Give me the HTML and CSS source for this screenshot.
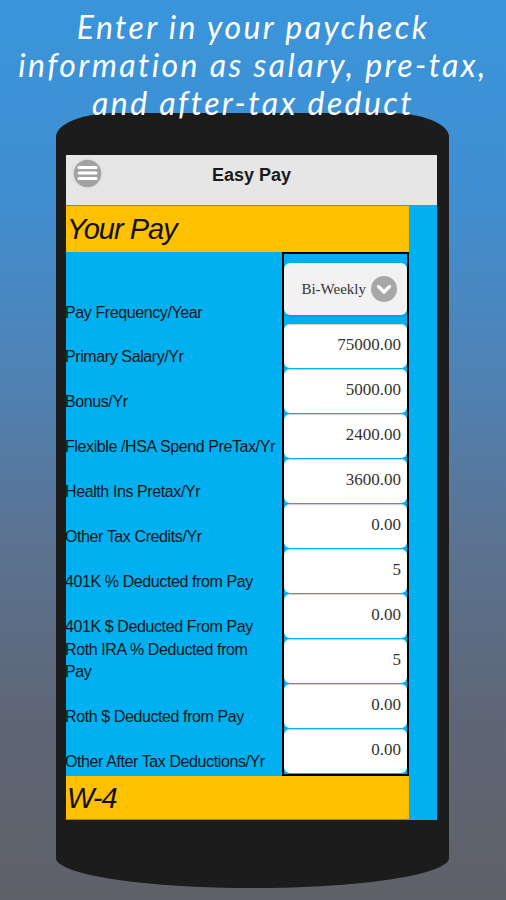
FILE: index.html
```html
<!DOCTYPE html>
<html lang="en">
<head>
  <meta charset="UTF-8" />
  <meta name="viewport" content="width=device-width, initial-scale=1.0" />
  <title>Easy Pay</title>
  <link rel="stylesheet" href="styles.css">
</head>
<body>
  <h1 class="promo">Enter in your paycheck<br>information as salary, pre-tax,<br>and after-tax deduct</h1>

  <div class="phone">
    <div class="screen">
      <header class="appbar">
        <button class="menu-btn" aria-label="Menu">
          <svg width="33" height="33" viewBox="0 0 33 33">
            <circle cx="16.5" cy="16.5" r="15" fill="#a2a2a2" stroke="#e2e2e2" stroke-width="2.5"/>
            <g stroke="#fff" stroke-width="3" stroke-linecap="round">
              <line x1="8" y1="10.5" x2="25" y2="10.5"/>
              <line x1="8" y1="16" x2="25" y2="16"/>
              <line x1="8" y1="21.5" x2="25" y2="21.5"/>
            </g>
          </svg>
        </button>
        <h2 class="appbar-title">Easy Pay</h2>
      </header>

      <div class="content">
        <h3 class="section-head">Your Pay</h3>

        <div class="pay-form">
          <div class="labels">
            <div class="label first">Pay Frequency/Year</div>
            <div class="label">Primary Salary/Yr</div>
            <div class="label">Bonus/Yr</div>
            <div class="label">Flexible /HSA Spend PreTax/Yr</div>
            <div class="label">Health Ins Pretax/Yr</div>
            <div class="label">Other Tax Credits/Yr</div>
            <div class="label">401K % Deducted from Pay</div>
            <div class="label">401K $ Deducted From Pay</div>
            <div class="label">Roth IRA % Deducted from<br>Pay</div>
            <div class="label">Roth $ Deducted from Pay</div>
            <div class="label">Other After Tax Deductions/Yr</div>
          </div>

          <div class="fields">
            <div class="select-row">
              <div class="select-box">
                <span>Bi-Weekly</span>
                <svg width="26" height="26" viewBox="0 0 26 26">
                  <circle cx="13" cy="13" r="13" fill="#a7a7a7"/>
                  <path d="M7.5 10.5 L13 16 L18.5 10.5" fill="none" stroke="#fff" stroke-width="3.2" stroke-linecap="round" stroke-linejoin="round"/>
                </svg>
              </div>
            </div>
            <div class="field">75000.00</div>
            <div class="field">5000.00</div>
            <div class="field">2400.00</div>
            <div class="field">3600.00</div>
            <div class="field">0.00</div>
            <div class="field">5</div>
            <div class="field">0.00</div>
            <div class="field">5</div>
            <div class="field">0.00</div>
            <div class="field">0.00</div>
          </div>
        </div>

        <h3 class="section-head w4">W-4</h3>
      </div>
    </div>
  </div>
</body>
</html>
```

FILE: styles.css
```css
/* Fondo general */
body {
  margin: 0;
  width: 506px;
  height: 900px;
  overflow: hidden;
  background: linear-gradient(180deg, #3a95db 0%, #3f8fd2 20%, #4f82b4 42%, #5a7391 60%, #5e6676 80%, #5f6168 100%);
  font-family: "Liberation Sans", Arial, sans-serif;
}

/* Titulo promocional */
.promo {
  position: relative;
  z-index: 1;
  margin: 8px 0 -9px;
  text-align: center;
  color: #fff;
  font-family: Lato, "Open Sans", sans-serif;
  font-style: italic;
  font-weight: 400;
  font-size: 32px;
  line-height: 38px;
  letter-spacing: 2.4px;
  white-space: nowrap;
}

/* Telefono */
.phone {
  width: 371px;
  height: 733px;
  margin-left: 56px;
  padding: 42px 12px 0 10px;
  background: #1c1c1c;
  border-radius: 60px 60px 50% 50% / 24px 24px 30px 30px;
}

.screen {
  width: 371px;
  height: 665px;
  overflow: hidden;
  background: #00b0f0;
}

/* Barra superior */
.appbar {
  display: grid;
  grid-template-columns: 1fr auto 1fr;
  align-items: center;
  height: 40px;
  padding-bottom: 10px;
  background: #e6e6e6;
}

.menu-btn {
  justify-self: start;
  align-self: start;
  margin: 2px 0 0 5px;
  padding: 0;
  border: none;
  background: none;
  line-height: 0;
}

.appbar-title {
  margin: 0;
  font-size: 18px;
  font-weight: bold;
  color: #1a1a1a;
}

/* Contenido */
.content {
  width: 343px;
  padding-top: 1px;
}

.section-head {
  margin: 0;
  height: 46px;
  padding-left: 1px;
  background: #ffc000;
  color: #111;
  font-style: italic;
  font-weight: normal;
  font-size: 29px;
  letter-spacing: -1px;
  line-height: 46px;
}

.section-head.w4 {
  height: 43px;
  line-height: 44px;
}

.pay-form {
  display: flex;
}

.labels {
  width: 216px;
  overflow: hidden;
}

.label {
  height: 45px;
  display: flex;
  align-items: flex-end;
  padding-bottom: 1px;
  box-sizing: border-box;
  margin-left: -1px;
  font-size: 16px;
  letter-spacing: -0.4px;
  line-height: 22px;
  color: #151515;
  white-space: nowrap;
}

.label.first {
  height: 72px;
  padding-bottom: 0;
}

.fields {
  width: 123px;
  border: 2px solid #000;
}

.select-row {
  height: 70px;
  padding-top: 9px;
  box-sizing: border-box;
}

.select-box {
  height: 52px;
  display: flex;
  align-items: center;
  justify-content: flex-end;
  gap: 5px;
  padding-right: 10px;
  background: #f2f2f2;
  border-radius: 6px;
  box-shadow: 0 1px 2px rgba(0, 0, 0, 0.15);
  font-family: "Liberation Serif", "Times New Roman", serif;
  font-size: 15px;
  color: #333;
}

.field {
  height: 44px;
  margin-bottom: 1px;
  padding-right: 6px;
  background: #fff;
  border-radius: 6px;
  box-shadow: inset 0 2px 1px -1px #cfcfcf;
  text-align: right;
  font-family: "Liberation Serif", "Times New Roman", serif;
  font-size: 17px;
  line-height: 42px;
  color: #333;
}
```
